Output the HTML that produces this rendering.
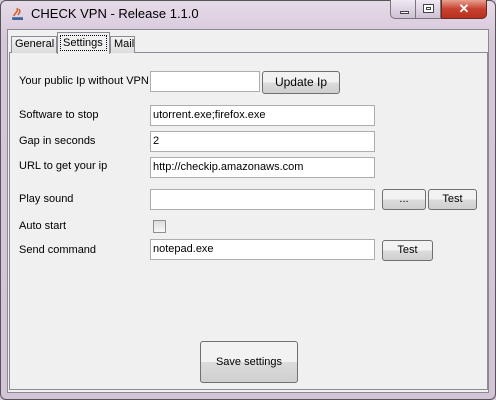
<!DOCTYPE html><html><head><style>
*{margin:0;padding:0;box-sizing:border-box}
body{width:496px;height:400px;overflow:hidden;background:#d9c9dc;font-family:"Liberation Sans",sans-serif;font-size:11px;color:#000;position:relative}
.a{position:absolute;white-space:nowrap}
.win{left:0;top:0;width:496px;height:400px;border:1px solid #555;border-radius:6px;background:linear-gradient(#e6dbe8,#d6c6da 40px,#d4c4d8)}
.client{left:7px;top:29px;width:482px;height:364px;background:#f0f0f0;border:1px solid #8a8a8a}
.panel{left:9px;top:52px;width:479px;height:338px;border:1px solid #898c95;background:#f0f0f0}
.tab{border:1px solid #898c95;border-bottom:none;background:linear-gradient(#f3f3f3,#dcdcdc);padding-left:3px;line-height:14px}
.fld{background:#fff;border:1px solid #abadb3;padding-left:2px;line-height:18px}
.btn{border:1px solid #707070;border-radius:3px;background:linear-gradient(#f2f2f2 50%,#dcdcdc 50%,#cfcfcf);text-align:center}
.lbl{left:19px}
</style></head><body>
<div class="a win"></div>
<div class="a" style="left:10px;top:6px;width:16px;height:16px;">
<svg width="16" height="16"><rect x="2" y="11" width="11" height="3" fill="#5a7bb0"/><path d="M4 10c0-3 5-4 3-8M8 9c1-2 3-3 1-6" stroke="#d45a20" stroke-width="1.5" fill="none"/><path d="M3 13h10" stroke="#2a4a80"/></svg></div>
<div class="a" style="left:31px;top:6px;font-size:13px;color:#000">CHECK VPN - Release 1.1.0</div>
<div class="a" style="left:390px;top:0;width:26px;height:19px;border:1px solid #777;border-top:none;border-radius:0 0 0 5px;background:linear-gradient(#f0e8f2,#cfc0d4)"><div class="a" style="left:9px;top:11px;width:9px;height:3px;background:#fff;border:1px solid #444"></div></div>
<div class="a" style="left:415px;top:0;width:26px;height:19px;border:1px solid #777;border-top:none;background:linear-gradient(#f0e8f2,#cfc0d4)"><div class="a" style="left:7px;top:4px;width:11px;height:9px;border:1px solid #444;background:#fff"><div class="a" style="left:2px;top:2px;width:5px;height:3px;border:1px solid #444"></div></div></div>
<div class="a" style="left:441px;top:0;width:46px;height:19px;border:1px solid #6b2a20;border-top:none;border-radius:0 0 5px 0;background:linear-gradient(#e8a090,#c84030 50%,#b83020);color:#fff;font-weight:bold;text-align:center;font-size:13px;line-height:17px">✕</div>
<div class="a client"></div>
<div class="a panel"></div>
<div class="a tab" style="left:11px;top:36px;width:46px;height:17px;padding-left:3px">General</div>
<div class="a tab" style="left:110px;top:36px;width:25px;height:17px">Mail</div>
<div class="a" style="left:57px;top:32px;width:53px;height:22px;background:#f0f0f0;border:1px solid #898c95;border-bottom:none"><div class="a" style="left:2px;top:2px;width:47px;height:16px;border:1px dotted #000;line-height:14px;padding-left:2px">Settings</div></div>
<div class="a lbl" style="top:75px">Your public Ip without VPN</div>
<div class="a fld" style="left:150px;top:71px;width:110px;height:21px"></div>
<div class="a btn" style="left:262px;top:71px;width:78px;height:23px;line-height:21px;font-size:12px">Update Ip</div>
<div class="a lbl" style="top:109px">Software to stop</div>
<div class="a fld" style="left:150px;top:105px;width:225px;height:21px">utorrent.exe;firefox.exe</div>
<div class="a lbl" style="top:135px">Gap in seconds</div>
<div class="a fld" style="left:150px;top:131px;width:225px;height:21px">2</div>
<div class="a lbl" style="top:160px">URL to get your ip</div>
<div class="a fld" style="left:150px;top:157px;width:225px;height:21px">http://checkip.amazonaws.com</div>
<div class="a lbl" style="top:193px">Play sound</div>
<div class="a fld" style="left:150px;top:189px;width:225px;height:21px"></div>
<div class="a btn" style="left:382px;top:189px;width:44px;height:21px;line-height:19px">...</div>
<div class="a btn" style="left:428px;top:189px;width:49px;height:21px;line-height:19px">Test</div>
<div class="a lbl" style="top:220px">Auto start</div>
<div class="a" style="left:153px;top:220px;width:13px;height:13px;border:1px solid #8f8f8f;background:linear-gradient(#ddd,#f8f8f8)"></div>
<div class="a lbl" style="top:244px">Send command</div>
<div class="a fld" style="left:150px;top:239px;width:225px;height:21px">notepad.exe</div>
<div class="a btn" style="left:382px;top:240px;width:51px;height:21px;line-height:19px">Test</div>
<div class="a btn" style="left:200px;top:341px;width:98px;height:42px;line-height:40px">Save settings</div>
</body></html>
